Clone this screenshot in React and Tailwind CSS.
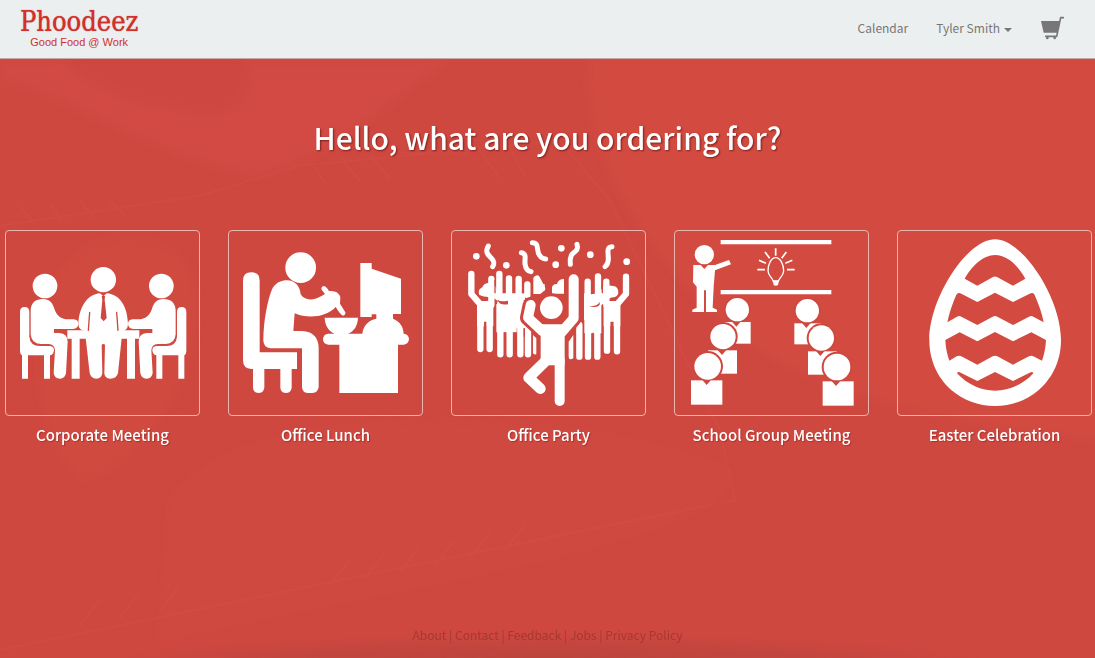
import React from "react";

const RED = "#cf4840";

function CorporateIcon() {
  const seated = (
    <g>
      <circle cx="135" cy="183" r="37" />
      <path d="M60 261Q60 246 74 246Q88 246 88 261V335Q90 362 120 363H150Q162 364 162 376Q161 391 148 391H66Q60 388 60 378Z" />
      <path d="M66 385H84V461H66ZM132 385H150V461H132Z" />
      <path d="M92 258C92 232 108 222 128 222C150 222 157 234 163 251C170 272 182 282 204 283L221 283Q235 284 235 297Q234 311 219 312L162 312V324H178Q203 326 203 350L198 445Q194 461 180 461Q163 461 161 444L165 376Q164 358 146 357H122Q94 356 92 328Z" />
    </g>
  );
  return (
    <svg viewBox="18 18 579 552" className="block h-auto w-full" fill="white" aria-hidden="true">
      {seated}
      <g transform="translate(619 0) scale(-1 1)">{seated}</g>
      <path d="M202 316H418V341H405V461H381V341H239V461H215V341H202Z" />
      <circle cx="310" cy="164" r="38" />
      <path d="M300 205L310 214L320 205C360 208 382 245 384 296Q384 316 366 318V330L354 444Q350 461 331 461Q313 460 313 444L315 359Q310 355 305 359L307 444Q305 461 289 461Q272 460 269 444L256 330V318Q235 315 235 296C238 245 262 208 300 205Z" />
      <path d="M269 262L265 316M350 262L354 316" stroke={RED} strokeWidth="4" fill="none" strokeLinecap="round" />
      <path d="M305 213H315L314 224L320 279L311 289L302 279L307 224Z" fill={RED} />
    </svg>
  );
}

function LunchIcon() {
  return (
    <svg viewBox="21 18 579 552" className="block h-auto w-full" fill="white" aria-hidden="true">
      <circle cx="236" cy="128" r="46" />
      <path d="M63 167Q63 142 88 142Q113 142 113 167V382H225V432H209V488Q207 504 192 504Q176 504 175 488V432H127V488Q125 504 110 504Q94 504 93 488V432H88Q63 431 63 405Z" />
      <path d="M124 343C125 285 137 225 149 196C158 173 178 166 196 166C217 167 234 182 236 208C247 228 276 227 300 212L309 207L299 194Q296 184 306 183Q313 184 321 198Q349 195 355 217L354 236L370 262Q372 270 363 272Q357 272 341 246C315 275 260 283 218 265L214 318H240C272 319 290 338 290 368V487Q287 504 270 504H258Q241 503 240 487V370H146Q123 368 124 343Z" />
      <path d="M308 278H408C407 302 396 319 378 326H421C424 300 440 286 463 281V268H449V276H415V114H449V131L537 161V267H513V281C535 290 544 306 545 326Q561 328 561 343Q560 357 545 359H528V504H352V359H319Q303 357 303 342Q304 327 319 326H338C320 318 309 302 308 278Z" />
    </svg>
  );
}

function DancerShape({ grow, color }) {
  return (
    <g fill={color} stroke={color} strokeLinecap="round" strokeLinejoin="round">
      <path d="M257 240L249 278L292 318" fill="none" strokeWidth={30 + grow} />
      <path d="M386 163V280L350 322" fill="none" strokeWidth={30 + grow} />
      <path d="M290 301H356V418H290Z" strokeWidth={6 + grow} />
      <path d="M344 405V528" fill="none" strokeWidth={30 + grow} />
      <path d="M302 408L251 458L286 491" fill="none" strokeWidth={32 + grow} />
      <circle cx="319" cy="248" r={34 + grow / 2} stroke="none" />
    </g>
  );
}

function PartyIcon() {
  return (
    <svg viewBox="21 18 579 552" className="block h-auto w-full" fill="white" aria-hidden="true">
      <g>
        <circle cx="94" cy="94" r="10" />
        <circle cx="184" cy="121" r="10" />
        <circle cx="332" cy="119" r="10" />
        <circle cx="349" cy="70" r="10" />
        <circle cx="436" cy="89" r="10" />
        <circle cx="545" cy="110" r="10" />
      </g>
      <g fill="none" stroke="white" strokeWidth="15" strokeLinecap="round" strokeLinejoin="round">
        <path d="M130 63C119 82 129 89 138 98C150 110 148 117 143 125" />
        <path d="M229 83C247 86 238 103 240 117C243 135 249 137 258 140" />
        <path d="M262 53C284 53 273 76 283 90C290 101 296 102 302 102" />
        <path d="M396 58C403 77 386 80 379 91C374 102 375 110 376 118" />
        <path d="M501 65C482 66 491 88 490 104C489 119 485 121 480 125" />
      </g>
      <g fill="none" stroke="white" strokeWidth="19" strokeLinecap="round" strokeLinejoin="round">
        <path d="M79 147V207L106 238V372M134 235V372M139 162V240M163 147V215M192 160V220" />
        <path d="M166 235V388M194 235V388M221 162V215M247 178V210M226 235V388M249 300V388M276 161L291 190" />
        <path d="M543 155V207L516 238V379M486 235V377M484 170V240M459 154V215M428 170V220M457 240V395M429 240V395M403 300V395" />
      </g>
      <path d="M96 228H145V304H125V290H117V304H96ZM154 238L172 228H215V322H154ZM215 215L240 230V310H215ZM417 240L440 225H469V325H417ZM476 228H526V304H506V290H496V304H476Z" />
      <path d="M103 210Q97 194 112 187Q116 174 133 174H145L163 205L192 205L221 205L240 205V224L215 240L155 226L142 215Q122 219 103 210Z" />
      <path d="M417 205L438 208L460 205L480 180L505 183Q520 184 520 204Q518 218 497 218L470 240H417Z" />
      <path d="M265 157L281 177H299V196L286 207H265ZM321 206V186Q325 176 336 177Q340 162 357 162V206Z" />
      <path d="M274 340V388Q263 390 264 380V330ZM371 350L385 330V400Q372 408 371 395Z" />
      <path d="M150 165V205M178 175V203M208 175V203M235 185V205M444 175V203M472 170V205M121 304V320M180 322V340M210 322V345M238 310V335M444 323V345M501 304V320M416 285V365M391 330V365" stroke={RED} strokeWidth="4" fill="none" />
      <path d="M158 224Q166 232 189 227V238Q162 242 158 224M430 242Q456 247 464 230V239Q456 251 430 242" fill={RED} />
      <DancerShape grow={18} color={RED} />
      <DancerShape grow={0} color="white" />
    </svg>
  );
}

function SchoolIcon() {
  const pupils = [
    { cx: 208, cy: 254, r: 35, x: 167, y: 291, w: 81, h: 65 },
    { cx: 165, cy: 335, r: 38, x: 120, y: 376, w: 87, h: 70 },
    { cx: 119, cy: 424, r: 40, x: 69, y: 466, w: 94, h: 73 },
    { cx: 418, cy: 257, r: 35, x: 379, y: 295, w: 81, h: 63 },
    { cx: 460, cy: 339, r: 38, x: 420, y: 379, w: 86, h: 70 },
    { cx: 507, cy: 426, r: 40, x: 464, y: 469, w: 93, h: 73 },
  ];
  return (
    <svg viewBox="21 18 579 552" className="block h-auto w-full" fill="white" aria-hidden="true">
      <path d="M158 45H490V58H158ZM158 195H490V208H158Z" />
      <circle cx="109" cy="89" r="29" />
      <path d="M76 120H98L109 132L120 120H141L183 105L189 118L141 136L137 185L134 248L147 254V261H114V196H108V261H73V254L86 248V185L75 172Z" />
      <g fill="none" stroke="white" strokeWidth="5">
        <path d="M323 70V92M291 81L305 100M355 81L341 100M273 106L294 115M373 106L352 115M268 134H291M357 134H380" />
        <path d="M323 98C309 98 300 119 300 137C300 153 314 158 316 169H331C333 158 347 153 347 137C347 119 337 98 323 98Z" strokeWidth="4" />
      </g>
      <path d="M314 166H333L330 180Q323 185 317 180Z" />
      {pupils.map((p) => (
        <g key={`${p.cx}-${p.cy}`}>
          <circle cx={p.cx} cy={p.cy} r={p.r + 6} fill={RED} />
          <rect x={p.x} y={p.y} width={p.w} height={p.h} />
          <path d={`M${p.cx - 16} ${p.y - 1}H${p.cx + 10}L${p.cx - 3} ${p.y + 14}Z`} fill={RED} />
          <circle cx={p.cx} cy={p.cy} r={p.r} />
        </g>
      ))}
    </svg>
  );
}

function EggIcon() {
  return (
    <svg viewBox="30 18 579 552" className="block h-auto w-full" fill="white" aria-hidden="true">
      <path
        fillRule="evenodd"
        d="M321 43C405 43 519 220 519 345C519 460 430 543 321 543C212 543 124 460 124 345C124 220 237 43 321 43Z
        M230 161L268 182L315 156Q321 153 327 156L375 182L412 161C392 125 360 90 321 90C285 90 250 125 230 161Z
        M178 292L207 275Q213 271 220 275L268 300L314 275Q321 271 328 275L375 300L423 275Q430 271 436 275L467 292C462 265 452 238 440 210Q437 202 428 205L375 231L321 203L268 231L220 206Q210 201 205 209C194 235 184 262 178 292Z
        M172 345C173 370 178 390 184 407L206 394Q213 391 220 394L268 419L314 394Q321 391 328 394L375 419L423 394Q430 391 436 394L462 407C468 390 473 370 474 345L430 322L375 349L321 321L268 349L215 322Z
        M207 445C240 480 280 497 321 497C360 497 405 480 436 445Q434 438 425 443L375 468L321 441L268 468L218 443Q210 438 207 445Z"
      />
    </svg>
  );
}

function CartIcon() {
  return (
    <svg viewBox="600 42 75 72" className="block h-6 w-[25px]" fill="#777" aria-hidden="true">
      <path d="M603 57H660L652 92H611Z" />
      <path d="M670 47H662L650 103H617" fill="none" stroke="#777" strokeWidth="5" strokeLinecap="round" strokeLinejoin="round" />
      <circle cx="622" cy="108" r="4" />
      <circle cx="644" cy="108" r="4" />
    </svg>
  );
}

function Backdrop() {
  return (
    <svg
      className="absolute inset-0 h-full w-full"
      viewBox="0 58 1095 600"
      preserveAspectRatio="none"
      aria-hidden="true"
    >
      <defs>
        <radialGradient id="fade" cx="0.5" cy="0.5" r="0.5">
          <stop offset="0" stopColor="#803a34" stopOpacity="0.25" />
          <stop offset="0.6" stopColor="#803a34" stopOpacity="0.15" />
          <stop offset="1" stopColor="#803a34" stopOpacity="0" />
        </radialGradient>
        <filter id="soft">
          <feGaussianBlur stdDeviation="5" />
        </filter>
      </defs>
      <g filter="url(#soft)">
        <path d="M0 58H450C380 110 320 165 255 175C160 160 60 90 0 80Z" fill="#d64f48" opacity="0.35" />
        <path d="M55 48H240C260 90 240 115 200 110C130 105 80 80 55 48Z" fill="#c8433c" opacity="0.3" />
        <path d="M590 48H1110V440C930 420 800 390 720 320C650 250 580 160 590 48Z" fill="#d65040" opacity="0.45" />
        <path d="M60 270C100 220 170 230 190 270C220 340 150 470 80 480C30 430 30 330 60 270Z" fill="#d65040" opacity="0.25" />
        <path d="M170 500C260 380 620 420 730 470C740 540 400 580 160 640Z" fill="#d8503c" opacity="0.15" />
      </g>
      <path
        d="M0 225L200 195L300 165L560 140L610 200L720 430L735 500L560 535L0 650M20 205L35 225M50 202L62 222M80 200L95 218M110 200L125 215M310 160L325 182M340 156L360 180M370 154L390 178M400 152H470M480 150L500 178M510 148L525 175M330 585L350 560M365 578L385 552M400 572L420 546M435 565L455 540M470 557L490 532M505 550L525 525M80 625L100 600M120 618L140 592M160 610L180 585"
        fill="none"
        stroke="#dc6058"
        strokeWidth="2"
        opacity="0.16"
      />
      <ellipse cx="548" cy="662" rx="440" ry="28" fill="url(#fade)" />
    </svg>
  );
}

const occasions = [
  { label: "Corporate Meeting", Icon: CorporateIcon },
  { label: "Office Lunch", Icon: LunchIcon },
  { label: "Office Party", Icon: PartyIcon },
  { label: "School Group Meeting", Icon: SchoolIcon },
  { label: "Easter Celebration", Icon: EggIcon },
];

const footerLinks = ["About", "Contact", "Feedback", "Jobs", "Privacy Policy"];

export default function App() {
  return (
    <div className="flex min-h-screen flex-col bg-[#cf4840] font-['Noto_Sans_CJK_SC','Open_Sans',sans-serif]">
      <header className="flex h-[59px] items-center justify-between border-b border-[#c9a8a6] bg-[#ebeff0] pr-[30px] pb-0.5 pl-5">
        <a href="#home" className="flex flex-col items-center text-[#d0312b]">
          <span className="font-['DejaVu_Serif_Condensed','DejaVu_Serif',serif] text-[27px] leading-7 [text-shadow:0_0_1px_#d0312b]">
            Phoodeez
          </span>
          <span className="font-['Liberation_Sans',sans-serif] text-[11px] leading-3">Good Food @ Work</span>
        </a>
        <nav className="flex items-center gap-7 text-xs leading-5 text-[#777]">
          <a href="#calendar">Calendar</a>
          <button type="button" className="flex items-center gap-1">
            Tyler Smith
            <svg viewBox="0 0 8 4" className="mt-1 h-1 w-2" fill="#777" aria-hidden="true">
              <path d="M0 0H8L4 4Z" />
            </svg>
          </button>
          <a href="#cart" aria-label="Cart">
            <CartIcon />
          </a>
        </nav>
      </header>

      <main className="relative flex flex-1 flex-col">
        <Backdrop />
        <h1 className="relative mt-[54px] text-center text-3xl leading-12 font-medium text-white [text-shadow:1px_1px_2px_#7a1f1a]">
          Hello, what are you ordering for?
        </h1>
        <ul className="relative mt-[69px] grid grid-cols-5 gap-7 pr-[3px] pl-[5px]">
          {occasions.map(({ label, Icon }) => (
            <li key={label}>
              <button type="button" className="block w-full text-white">
                <span className="block rounded border border-[#e9b5b1]">
                  <Icon />
                </span>
                <span className="mt-[7px] block text-center text-[15px] leading-6 font-medium whitespace-nowrap [text-shadow:1px_1px_1px_#a8332c]">
                  {label}
                </span>
              </button>
            </li>
          ))}
        </ul>
        <footer className="relative mt-auto pb-[13px] text-center text-xs leading-5 text-[#a63831]">
          {footerLinks.map((link, i) => (
            <React.Fragment key={link}>
              {i > 0 && " | "}
              <a href={`#${link.toLowerCase().replace(" ", "-")}`}>{link}</a>
            </React.Fragment>
          ))}
        </footer>
      </main>
    </div>
  );
}
